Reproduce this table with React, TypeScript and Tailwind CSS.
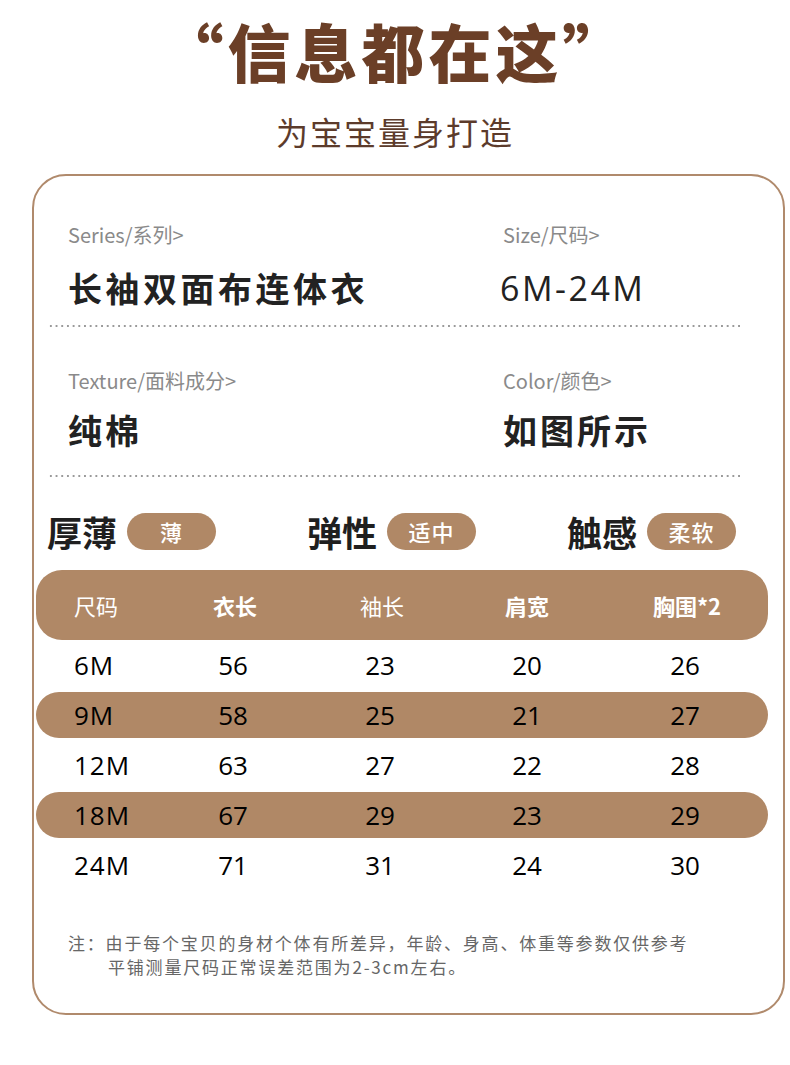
import React from "react";

const CJK = "font-['Noto_Sans_CJK_SC','Noto_Sans',sans-serif]";

const rows = [
  ["6M", "56", "23", "20", "26"],
  ["9M", "58", "25", "21", "27"],
  ["12M", "63", "27", "22", "28"],
  ["18M", "67", "29", "23", "29"],
  ["24M", "71", "31", "24", "30"],
];

function Dotted() {
  return (
    <div className="h-[2px] ml-[14px] w-[694px] bg-[radial-gradient(circle,#9a9a9a_0.9px,transparent_1.2px)] bg-[length:5.7px_2px] bg-repeat-x" />
  );
}

function Pill({ label, value }: { label: string; value: string }) {
  return (
    <div className="flex items-center gap-[10px]">
      <span className="text-[35px] leading-none font-bold text-[#1f1f1f]">{label}</span>
      <span className="flex h-[37px] w-[89px] items-center justify-center rounded-full bg-[#b08866] text-[22px] font-medium text-white tracking-[1px]">
        {value}
      </span>
    </div>
  );
}

export default function App() {
  return (
    <div className={`${CJK} w-[790px] h-[1065px] bg-white overflow-hidden`}>
      <div className="pt-[18px] text-center text-[63px] leading-none font-black text-[#6b3f27] tracking-[4px]">
        “信息都在这”
      </div>
      <div className="mt-[34px] text-center text-[32px] leading-none text-[#5c3b2b] tracking-[2px]">
        为宝宝量身打造
      </div>
      <div className="mt-[27px] ml-[32px] w-[753px] h-[841px] rounded-[34px] border-2 border-[#b08a6c] bg-white">
        <div className="pt-[49px] pl-[34px] grid grid-cols-[435px_1fr]">
          <div>
            <div className="text-[20px] leading-none text-[#8a8a8a]">Series/系列&gt;</div>
            <div className="mt-[26px] text-[34px] leading-none font-bold text-[#222] tracking-[3.5px]">长袖双面布连体衣</div>
          </div>
          <div>
            <div className="text-[20px] leading-none text-[#8a8a8a]">Size/尺码&gt;</div>
            <div className="mt-[26px] -ml-[3px] text-[34px] leading-none text-[#222] tracking-[2.5px] font-['Open_Sans',sans-serif]">6M-24M</div>
          </div>
        </div>
        <div className="mt-[20px]">
          <Dotted />
        </div>
        <div className="mt-[44px] pl-[34px] grid grid-cols-[435px_1fr]">
          <div>
            <div className="text-[20px] leading-none text-[#8a8a8a]">Texture/面料成分&gt;</div>
            <div className="mt-[22px] text-[34px] leading-none font-bold text-[#222] tracking-[3px]">纯棉</div>
          </div>
          <div>
            <div className="text-[20px] leading-none text-[#8a8a8a]">Color/颜色&gt;</div>
            <div className="mt-[22px] text-[34px] leading-none font-bold text-[#222] tracking-[3px]">如图所示</div>
          </div>
        </div>
        <div className="mt-[28px]">
          <Dotted />
        </div>
        <div className="mt-[36px] ml-[13px] flex gap-[91px]">
          <Pill label="厚薄" value="薄" />
          <Pill label="弹性" value="适中" />
          <Pill label="触感" value="柔软" />
        </div>
        <div className="mt-[20px] ml-[2px] w-[732px]">
          <div className="grid grid-cols-[140px_118px_176px_114px_206px] h-[70px] items-center rounded-[26px] bg-[#b08866] text-[22px] text-white leading-none">
            <div className="pl-[38px]">尺码</div>
            <div className="text-center font-bold">衣长</div>
            <div className="text-center">袖长</div>
            <div className="text-center font-bold">肩宽</div>
            <div className="text-center font-bold">胸围*2</div>
          </div>
          <div className="mt-[2px] flex flex-col gap-[4px] font-['Open_Sans',sans-serif] text-[26px] text-black">
            {rows.map((r, i) => (
              <div
                key={r[0]}
                className={`grid grid-cols-[140px_118px_176px_114px_206px] h-[46px] items-center rounded-full ${
                  i % 2 === 1 ? "bg-[#b08866]" : ""
                }`}
              >
                <div className="pl-[38px] tracking-[1px]">{r[0]}</div>
                <div className="text-center pr-[4px]">{r[1]}</div>
                <div className="text-center pr-[4px]">{r[2]}</div>
                <div className="text-center">{r[3]}</div>
                <div className="text-center pr-[4px]">{r[4]}</div>
              </div>
            ))}
          </div>
        </div>
        <div className="mt-[43px] pl-[34px] text-[17px] leading-[24px] text-[#666] tracking-[1.8px]">
          <div>注：由于每个宝贝的身材个体有所差异，年龄、身高、体重等参数仅供参考</div>
          <div className="pl-[40px]">平铺测量尺码正常误差范围为2-3cm左右。</div>
        </div>
      </div>
    </div>
  );
}
